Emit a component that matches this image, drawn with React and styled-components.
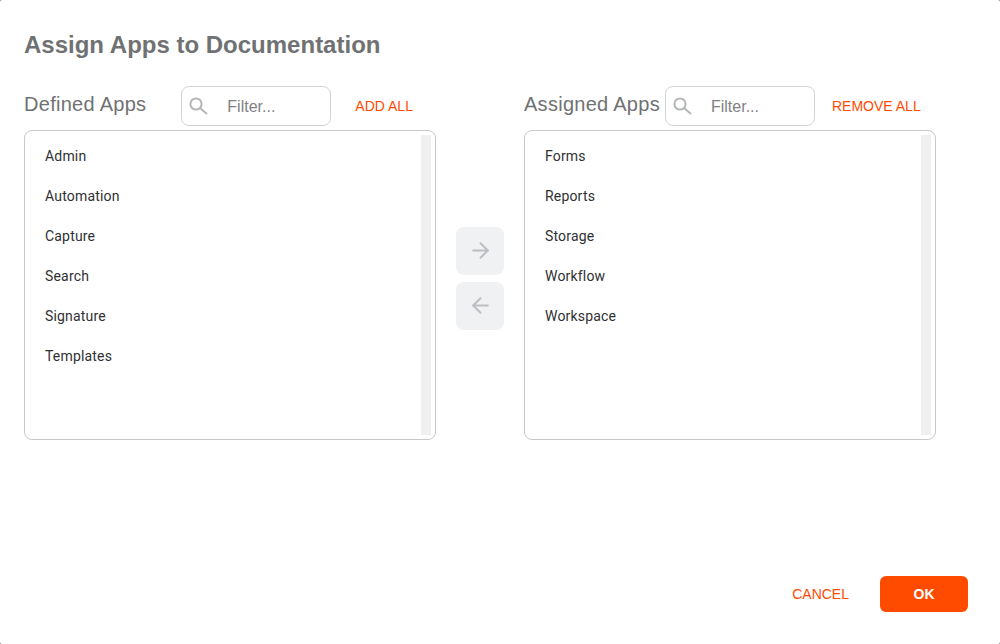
import React from 'react';
import styled, { createGlobalStyle } from 'styled-components';
import { ArrowRight, ArrowLeft } from 'lucide-react';

const defined = ['Admin', 'Automation', 'Capture', 'Search', 'Signature', 'Templates'];
const assigned = ['Forms', 'Reports', 'Storage', 'Workflow', 'Workspace'];

const SearchIcon = () => (
  <svg width="20" height="20" viewBox="0 0 20 20" fill="none" stroke="#b4b6b8" strokeWidth="2">
    <circle cx="8" cy="8" r="5.6" />
    <path d="M12.2 12.2 L19 18" />
  </svg>
);

const AppList = ({ title, action, items, filterGap, actionGap }) => (
  <Column>
    <ColumnHeader>
      <ColumnTitle>{title}</ColumnTitle>
      <FilterBox $gap={filterGap}>
        <SearchIcon />
        <FilterInput placeholder="Filter..." readOnly />
      </FilterBox>
      <TextButton $gap={actionGap}>{action}</TextButton>
    </ColumnHeader>
    <ListBox>
      <Items>
        {items.map(item => (
          <Item key={item}>{item}</Item>
        ))}
      </Items>
      <Track />
    </ListBox>
  </Column>
);

const App = () => {
  return (
    <Dialog>
      <GlobalStyle />
      <Title>Assign Apps to Documentation</Title>

      <Body>
        <AppList title="Defined Apps" action="ADD ALL" items={defined} filterGap={35} actionGap={24} />

        <Mover>
          <MoveButton><ArrowRight size={25} color="#bcbec2" strokeWidth={1.9} /></MoveButton>
          <MoveButton><ArrowLeft size={25} color="#bcbec2" strokeWidth={1.9} /></MoveButton>
        </Mover>

        <AppList title="Assigned Apps" action="REMOVE ALL" items={assigned} filterGap={5} actionGap={17} />
      </Body>

      <Footer>
        <CancelButton>CANCEL</CancelButton>
        <OkButton>OK</OkButton>
      </Footer>
    </Dialog>
  );
};

export default App;

const GlobalStyle = createGlobalStyle`
  html, body {
    margin: 0;
    padding: 0;
    background: #777;
  }
`;

const Dialog = styled.div`
  box-sizing: border-box;
  width: 1000px;
  height: 644px;
  padding: 30px 32px 32px 24px;
  display: flex;
  flex-direction: column;
  background: #fff;
  border-radius: 2px;
  font-family: "Liberation Sans", Arial, sans-serif;
`;

const Title = styled.h2`
  margin: 0;
  font-size: 24px;
  line-height: 30px;
  font-weight: 700;
  color: #707173;
`;

const Body = styled.div`
  display: flex;
  margin-top: 26px;
`;

const Column = styled.div`
  width: 412px;
  display: flex;
  flex-direction: column;
`;

const ColumnHeader = styled.div`
  height: 40px;
  display: flex;
  align-items: center;
  white-space: nowrap;
`;

const ColumnTitle = styled.div`
  font-size: 20px;
  line-height: 36px;
  margin-top: -4px;
  letter-spacing: 0.28px;
  color: #707173;
`;

const FilterBox = styled.label`
  box-sizing: border-box;
  width: 150px;
  height: 40px;
  margin-left: ${p => p.$gap}px;
  padding-left: 6px;
  display: flex;
  align-items: center;
  flex-shrink: 0;
  border: 1px solid #d2d3d5;
  border-radius: 8px;
  background: #fff;
`;

const FilterInput = styled.input`
  width: 90px;
  margin: 2px 0 0 19px;
  padding: 0;
  border: none;
  outline: none;
  background: transparent;
  font-family: "Liberation Sans", Arial, sans-serif;
  font-size: 16px;
  color: #707173;

  &::placeholder {
    color: #808184;
    opacity: 1;
  }
`;

const TextButton = styled.button`
  margin-left: ${p => p.$gap}px;
  padding: 0;
  border: none;
  background: none;
  font-family: "Liberation Sans", Arial, sans-serif;
  font-size: 14px;
  color: #ff4b00;
  cursor: pointer;
`;

const ListBox = styled.div`
  box-sizing: border-box;
  height: 310px;
  margin-top: 4px;
  padding: 4px;
  display: flex;
  justify-content: space-between;
  border: 1px solid #c8c9cb;
  border-radius: 8px;
`;

const Items = styled.div`
  padding: 1px 0 0 16px;
`;

const Item = styled.div`
  height: 40px;
  display: flex;
  align-items: center;
  font-family: Roboto, sans-serif;
  font-size: 14px;
  letter-spacing: 0.18px;
  color: #2f3032;
`;

const Track = styled.div`
  width: 10px;
  background: #f0f0f0;
`;

const Mover = styled.div`
  width: 88px;
  padding-top: 141px;
  display: flex;
  flex-direction: column;
  align-items: center;
  gap: 7px;
`;

const MoveButton = styled.button`
  width: 48px;
  height: 48px;
  padding: 0 0 1px;
  display: flex;
  align-items: center;
  justify-content: center;
  border: none;
  border-radius: 8px;
  background: #f0f1f3;
  cursor: default;
`;

const Footer = styled.div`
  margin-top: auto;
  display: flex;
  align-items: center;
  justify-content: flex-end;
  gap: 31px;
`;

const CancelButton = styled.button`
  padding: 0;
  border: none;
  background: none;
  font-family: "Liberation Sans", Arial, sans-serif;
  font-size: 14px;
  color: #ff4b00;
  cursor: pointer;
`;

const OkButton = styled.button`
  width: 88px;
  height: 36px;
  border: none;
  border-radius: 6px;
  background: #ff4b00;
  font-family: "Liberation Sans", Arial, sans-serif;
  font-size: 14px;
  font-weight: 700;
  color: #fff;
  cursor: pointer;
`;
